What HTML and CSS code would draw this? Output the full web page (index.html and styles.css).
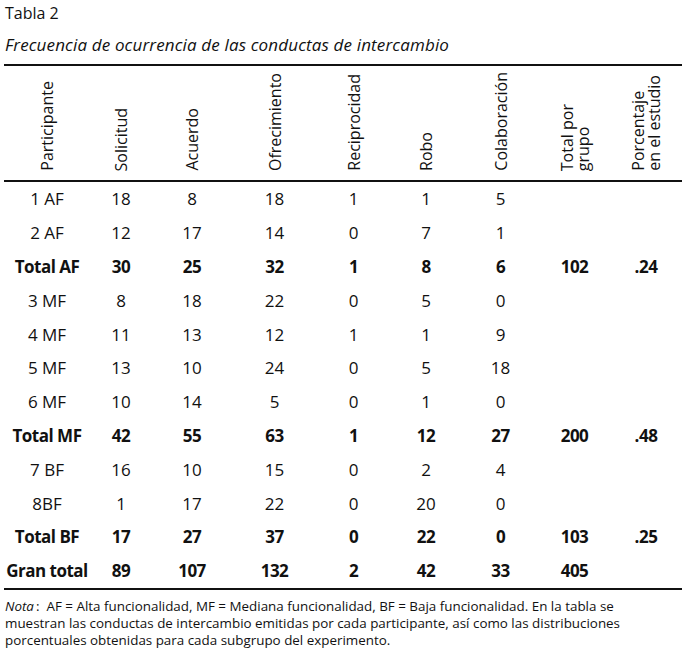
FILE: index.html
```html
<!DOCTYPE html>
<html lang="es">
<head>
<meta charset="utf-8">
<title>Tabla 2</title>
<link rel="stylesheet" href="styles.css">
</head>
<body>
<div class="page">
  <div class="title">Tabla 2</div>
  <div class="subtitle">Frecuencia de ocurrencia de las conductas de intercambio</div>
  <div class="grid">
    <div class="head"><span class="rot">Participante</span></div>
    <div class="head"><span class="rot">Solicitud</span></div>
    <div class="head"><span class="rot">Acuerdo</span></div>
    <div class="head"><span class="rot">Ofrecimiento</span></div>
    <div class="head"><span class="rot">Reciprocidad</span></div>
    <div class="head"><span class="rot">Robo</span></div>
    <div class="head"><span class="rot">Colaboración</span></div>
    <div class="head"><span class="rot">Total por<br>grupo</span></div>
    <div class="head"><span class="rot">Porcentaje<br>en el estudio</span></div>

    <div class="c">1 AF</div><div class="c">18</div><div class="c">8</div><div class="c">18</div><div class="c">1</div><div class="c">1</div><div class="c">5</div><div class="c"></div><div class="c"></div>
    <div class="c">2 AF</div><div class="c">12</div><div class="c">17</div><div class="c">14</div><div class="c">0</div><div class="c">7</div><div class="c">1</div><div class="c"></div><div class="c"></div>
    <div class="c b">Total AF</div><div class="c b">30</div><div class="c b">25</div><div class="c b">32</div><div class="c b">1</div><div class="c b">8</div><div class="c b">6</div><div class="c b">102</div><div class="c b">.24</div>
    <div class="c">3 MF</div><div class="c">8</div><div class="c">18</div><div class="c">22</div><div class="c">0</div><div class="c">5</div><div class="c">0</div><div class="c"></div><div class="c"></div>
    <div class="c">4 MF</div><div class="c">11</div><div class="c">13</div><div class="c">12</div><div class="c">1</div><div class="c">1</div><div class="c">9</div><div class="c"></div><div class="c"></div>
    <div class="c">5 MF</div><div class="c">13</div><div class="c">10</div><div class="c">24</div><div class="c">0</div><div class="c">5</div><div class="c">18</div><div class="c"></div><div class="c"></div>
    <div class="c">6 MF</div><div class="c">10</div><div class="c">14</div><div class="c">5</div><div class="c">0</div><div class="c">1</div><div class="c">0</div><div class="c"></div><div class="c"></div>
    <div class="c b">Total MF</div><div class="c b">42</div><div class="c b">55</div><div class="c b">63</div><div class="c b">1</div><div class="c b">12</div><div class="c b">27</div><div class="c b">200</div><div class="c b">.48</div>
    <div class="c">7 BF</div><div class="c">16</div><div class="c">10</div><div class="c">15</div><div class="c">0</div><div class="c">2</div><div class="c">4</div><div class="c"></div><div class="c"></div>
    <div class="c">8BF</div><div class="c">1</div><div class="c">17</div><div class="c">22</div><div class="c">0</div><div class="c">20</div><div class="c">0</div><div class="c"></div><div class="c"></div>
    <div class="c b">Total BF</div><div class="c b">17</div><div class="c b">27</div><div class="c b">37</div><div class="c b">0</div><div class="c b">22</div><div class="c b">0</div><div class="c b">103</div><div class="c b">.25</div>
    <div class="c b">Gran total</div><div class="c b">89</div><div class="c b">107</div><div class="c b">132</div><div class="c b">2</div><div class="c b">42</div><div class="c b">33</div><div class="c b">405</div><div class="c b"></div>
  </div>
  <p class="note"><em class="nota">Nota</em>:&nbsp; AF = Alta funcionalidad, MF = Mediana funcionalidad, BF = Baja funcionalidad. En la tabla se muestran las conductas de intercambio emitidas por cada participante, así como las distribuciones porcentuales obtenidas para cada subgrupo del experimento.</p>
</div>
</body>
</html>
```

FILE: styles.css
```css
html, body {
  margin: 0;
  padding: 0;
  background: #fff;
}
body {
  font-family: "Open Sans", "Noto Sans", sans-serif;
  color: #111;
}
.page {
  width: 678px;
  padding-left: 4px;
}
.title {
  font-size: 16px;
  line-height: 26px;
  padding-left: 1px;
}
.subtitle {
  font-size: 17px;
  font-style: italic;
  line-height: 20px;
  margin-top: 9px;
  padding-left: 1px;
  letter-spacing: 0.15px;
}
.grid {
  margin-top: 9px;
  display: grid;
  grid-template-columns: 86px 62px 80px 85px 73px 72px 77px 71px 72px;
  grid-template-rows: 116px;
  grid-auto-rows: 33.8px;
  border-top: 2px solid #111;
  border-bottom: 2px solid #111;
}
.head {
  border-bottom: 2px solid #111;
  display: flex;
  align-items: flex-end;
  justify-content: center;
  padding-bottom: 9px;
}
.rot {
  writing-mode: vertical-rl;
  transform: rotate(180deg);
  font-size: 16px;
  line-height: 16px;
  white-space: nowrap;
}
.c {
  display: flex;
  align-items: center;
  justify-content: center;
  font-size: 17px;
}
.b {
  font-weight: 700;
  letter-spacing: -0.5px;
}
.note {
  margin: 8px 0 0 1px;
  font-size: 13.4px;
  line-height: 17px;
  width: 625px;
}
.nota {
  display: inline-block;
  padding-right: 2px;
}
```
